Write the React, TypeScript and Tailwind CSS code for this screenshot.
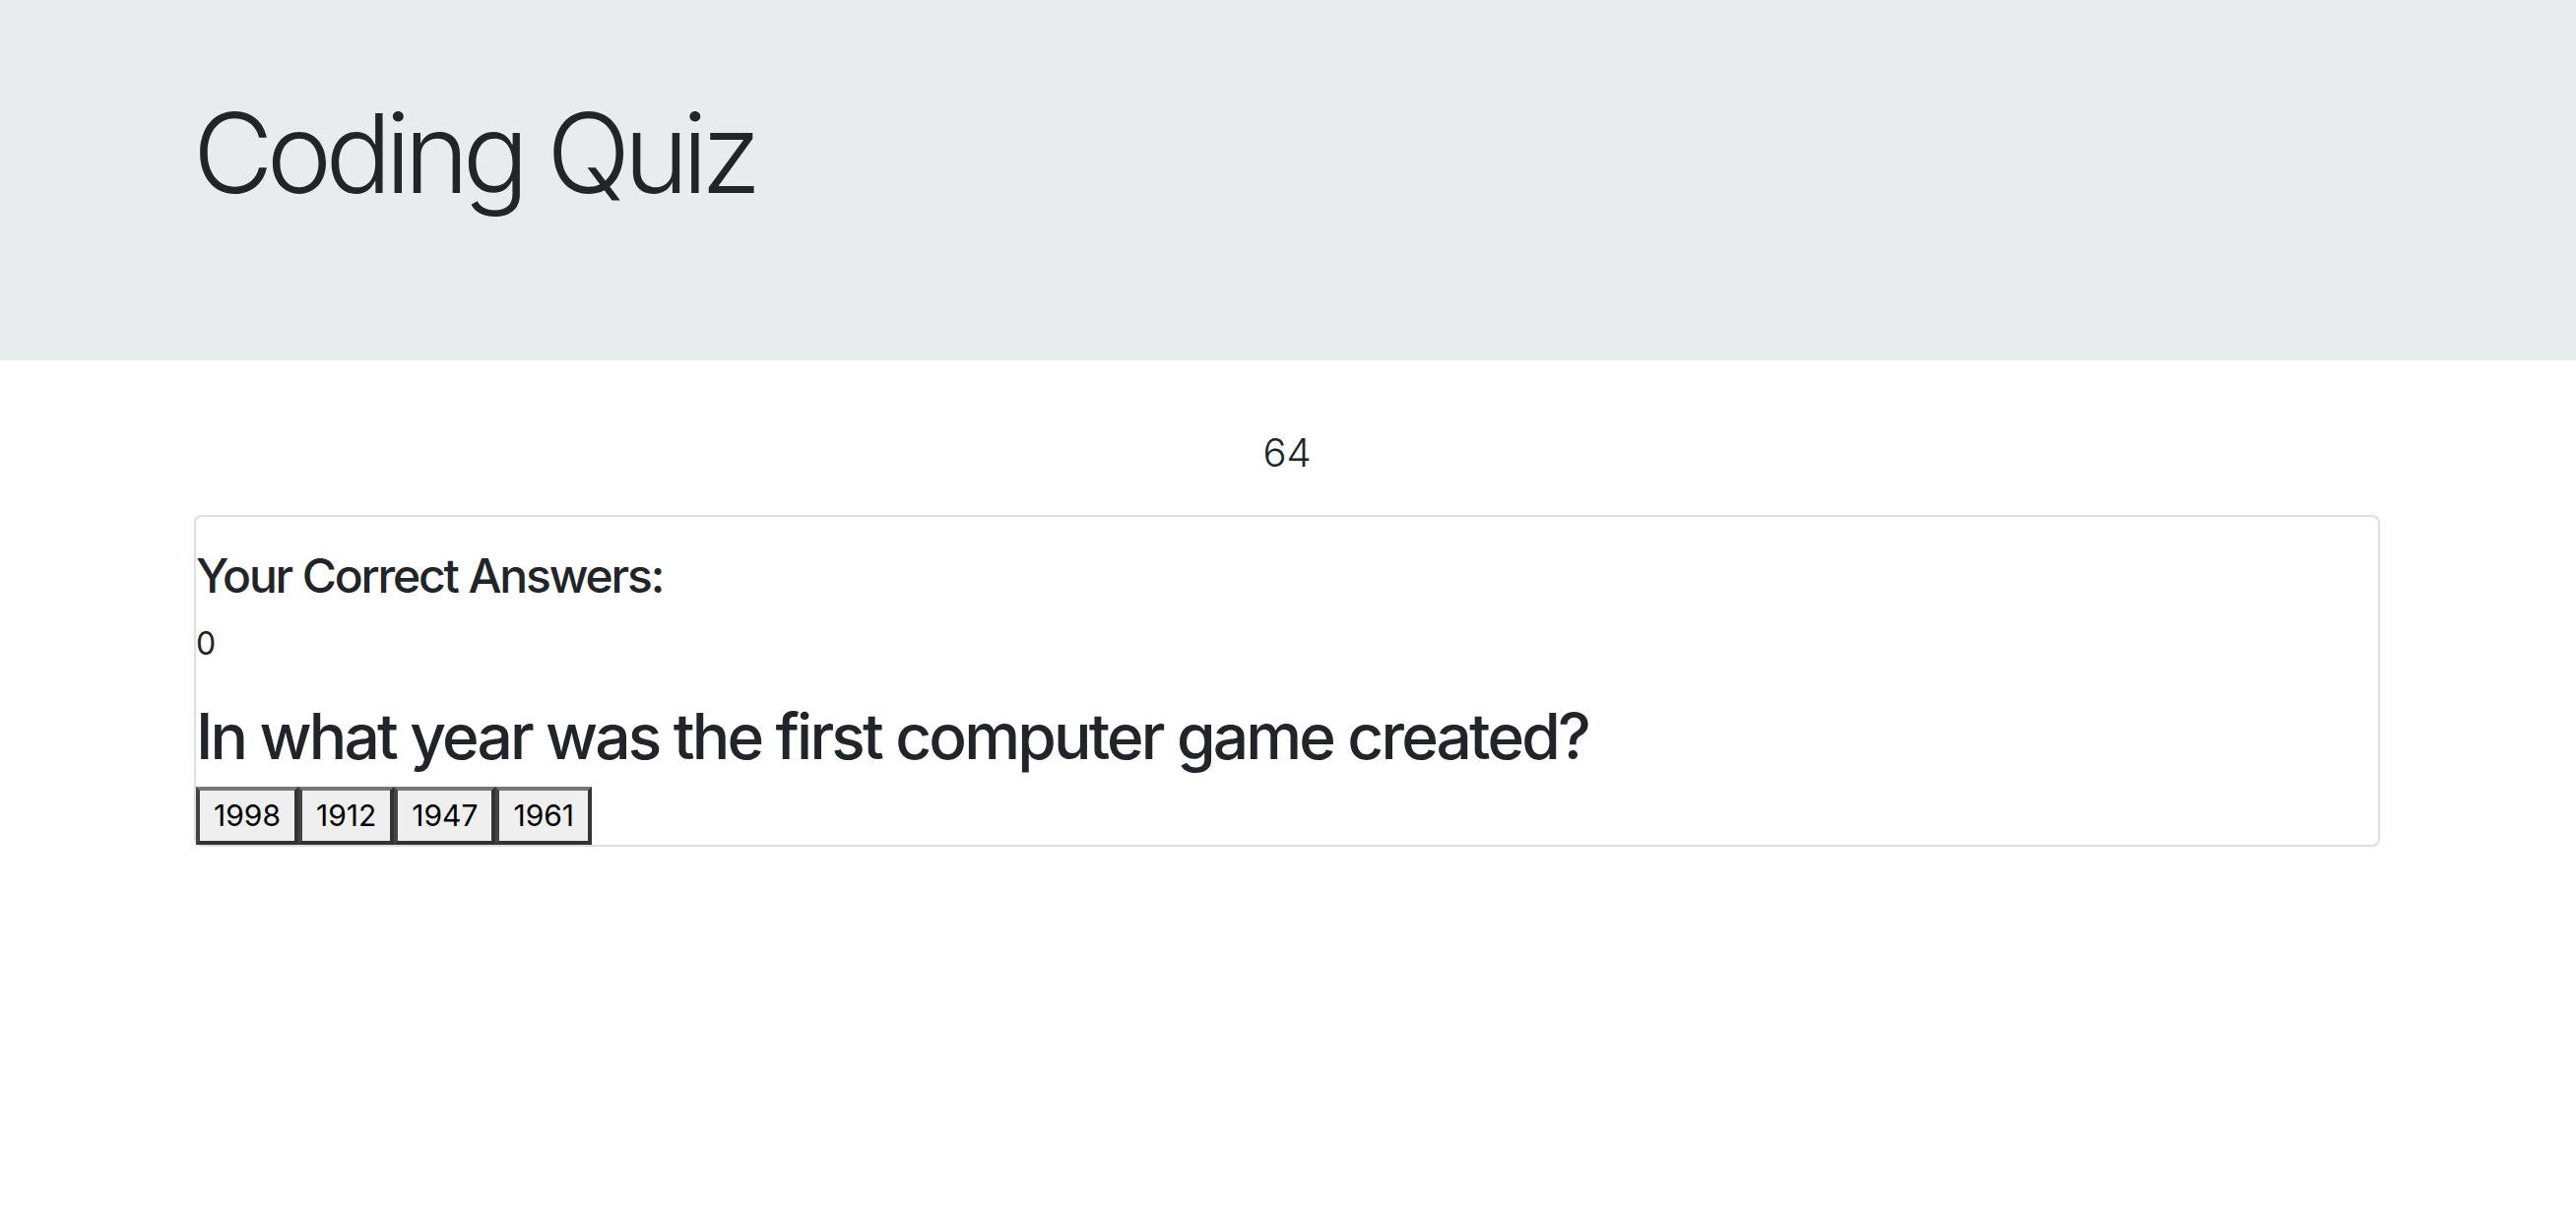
import { useState } from "react";

const answers = ["1998", "1912", "1947", "1961"];

function App() {
    const [timeLeft] = useState(64);
    const [correct, setCorrect] = useState(0);

    const handleAnswer = (year: string) => {
        if (year === "1961") {
            setCorrect(prev => prev + 1);
        }
    };

    return (
        <div className="min-h-screen bg-white text-[#212529] font-['Inter',sans-serif]">
            <header className="h-[366px] bg-[#e9ecef] pt-[88px]">
                <div className="mx-auto w-[2280px] pl-[28px] pr-[32px]">
                    <h1 className="text-[112px] leading-[1.2] font-light tracking-[-0.06em]">Coding Quiz</h1>
                </div>
            </header>

            <div className="mx-auto w-[2280px] pl-[29px] pr-[31px] pt-[64px]">
                <div className="text-center text-[40px] leading-[60px] font-light mb-[33px]">{timeLeft}</div>

                <div className="border-2 border-[#dfdfdf] rounded-[8px] pt-[31px]">
                    <h4 className="text-[48px] leading-[1.2] font-medium tracking-[-0.045em] mb-[16px]">Your Correct Answers:</h4>
                    <p className="text-[32px] leading-[1.5] mb-[32px]">{correct}</p>
                    <h2 className="text-[64px] leading-[1.2] font-medium tracking-[-0.044em] mb-[13px]">
                        In what year was the first computer game created?
                    </h2>
                    <div className="flex">
                        {answers.map(year => (
                            <button
                                key={year}
                                onClick={() => handleAnswer(year)}
                                className="h-[59px] px-[14px] bg-[#efefef] text-black text-[30px] border-4 border-[#333] border-t-[#777] border-l-[#444]"
                            >
                                {year}
                            </button>
                        ))}
                    </div>
                </div>
            </div>
        </div>
    );
}

export default App;
